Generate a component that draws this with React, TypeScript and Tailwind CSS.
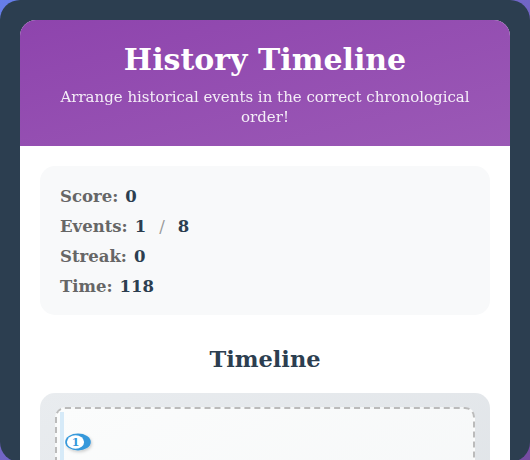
import React from "react"

const stats = [
  { label: "Score:", value: "0" },
  { label: "Events:", value: "1", total: "8" },
  { label: "Streak:", value: "0" },
  { label: "Time:", value: "118" },
]

const serif = "Georgia, 'DejaVu Serif', serif"

export default function App() {
  return (
    <div
      className="min-h-screen bg-gradient-to-br from-[#667eea] to-[#764ba2]"
      style={{ fontFamily: serif }}
    >
      <div className="h-[462px] overflow-hidden rounded-[20px] bg-[#2c3e50] px-5 pt-5">
        <div className="overflow-hidden rounded-t-[16px] bg-white">
          {/* Header */}
          <div className="bg-gradient-to-br from-[#8e44ad] to-[#9b59b6] px-5 pb-[19px] pt-[21px] text-center text-white">
            <h1 className="text-[30px] font-bold leading-[38px]">History Timeline</h1>
            <p className="mt-[8px] text-[15px] leading-[20px] opacity-90">
              Arrange historical events in the correct chronological order!
            </p>
          </div>

          <div className="px-5 pt-5">
            {/* Stats */}
            <div className="rounded-[15px] bg-[#f8f9fa] px-5 pb-[13px] pt-[16px]">
              {stats.map((s) => (
                <div key={s.label} className="flex h-[30px] items-center gap-[7px] text-[16.5px] font-bold">
                  <span className="text-[#666]">{s.label}</span>
                  <span className="text-[#2c3e50]">{s.value}</span>
                  {s.total && (
                    <>
                      <span className="mx-[6px] font-normal text-[#999]">/</span>
                      <span className="text-[#2c3e50]">{s.total}</span>
                    </>
                  )}
                </div>
              ))}
            </div>

            {/* Timeline */}
            <h2 className="mt-[30px] text-center text-[22.5px] font-bold leading-[28px] text-[#2c3e50]">Timeline</h2>

            <div className="mt-[20px] rounded-[15px] bg-gradient-to-br from-[#e9ecef] to-[#dee2e6] px-[15px] pt-[14px]">
              <div className="relative h-[200px] rounded-[10px] border-2 border-dashed border-[#bbb] bg-gradient-to-br from-[#fbfcfc] to-[#f4f6f7]">
                <div className="absolute bottom-0 left-[3px] top-[3px] w-[4px] bg-[#d6eaf8]" />
                <div className="absolute left-[8px] top-[24px]">
                  <svg width="30" height="22" viewBox="0 0 30 22">
                    <defs>
                      <filter id="sh" x="-30%" y="-30%" width="160%" height="170%">
                        <feDropShadow dx="1" dy="1.5" stdDeviation="1.5" floodColor="#000" floodOpacity="0.2" />
                      </filter>
                    </defs>
                    <ellipse cx="13" cy="9" rx="12.8" ry="8.5" fill="#3498db" filter="url(#sh)" />
                    <ellipse cx="10.5" cy="9" rx="8.6" ry="6.8" fill="#fff" />
                    <text x="10.5" y="13" textAnchor="middle" fontSize="11" fontWeight="bold" fill="#3498db" fontFamily={serif}>1</text>
                  </svg>
                </div>
              </div>
            </div>
          </div>
        </div>
      </div>
    </div>
  )
}
